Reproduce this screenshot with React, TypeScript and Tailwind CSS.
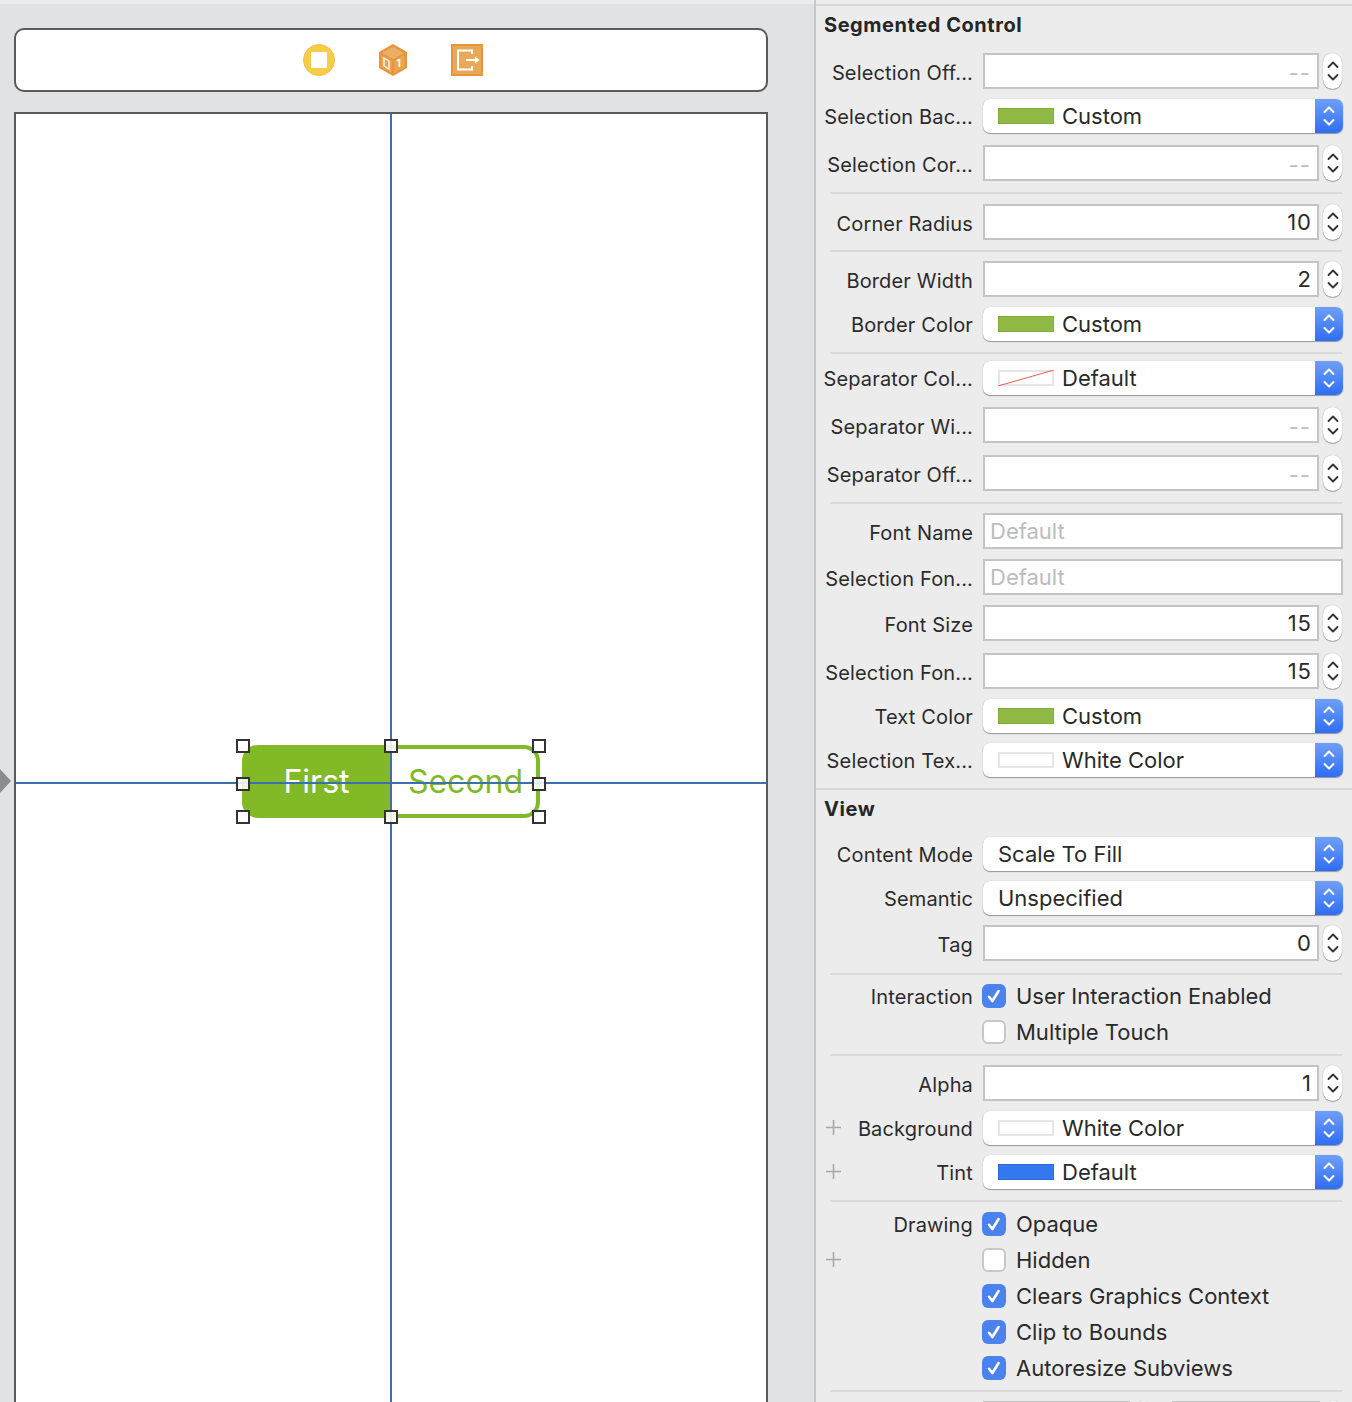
import React from 'react';

const FONT = 'font-["Inter","Liberation_Sans",sans-serif]';

const Divider: React.FC<{ className: string }> = ({ className }) => (
  <div className={`h-[2px] ml-[14px] mr-[10px] bg-[#d9d9d9] ${className}`} />
);

const Chevrons: React.FC<{ color: string; sw?: number }> = ({ color, sw = 2 }) => (
  <svg width="14" height="26" viewBox="0 0 14 26" fill="none" stroke={color} strokeWidth={sw} strokeLinecap="round" strokeLinejoin="round">
    <path d="M2.5 9 L7 4.5 L11.5 9" />
    <path d="M2.5 17 L7 21.5 L11.5 17" />
  </svg>
);

const Stepper = () => (
  <div className="ml-[4px] w-[19px] h-[36px] rounded-full bg-white shadow-[0_1px_1px_rgba(0,0,0,0.3),0_0_1px_rgba(0,0,0,0.3)] flex items-center justify-center shrink-0">
    <Chevrons color="#333333" sw={1.8} />
  </div>
);

// label column, right aligned, with an optional plus on the left
const Label: React.FC<{ text?: string; plus?: boolean; nudge?: boolean }> = ({ text, plus, nudge }) => (
  <div className={`w-[157px] shrink-0 flex items-center justify-between text-[20px] tracking-[0.15px] text-[#2b2b2b] ${nudge ? 'pt-[3px]' : 'pt-[1px]'}`}>
    {plus ? (
      <svg className="ml-[10px] -mt-[3px]" width="15" height="15" viewBox="0 0 15 15" stroke="#a8a8a8" strokeWidth="1.6">
        <path d="M7.5 0 V15 M0 7.5 H15" />
      </svg>
    ) : (
      <span />
    )}
    <span className="whitespace-nowrap">{text}</span>
  </div>
);

const NumberRow: React.FC<{ label: string; value?: string; className: string }> = ({ label, value, className }) => (
  <div className={`flex h-[36px] pr-[10px] ${className}`}>
    <Label text={label} nudge />
    <div className="ml-[10px] w-[336px] h-[36px] bg-white border-2 border-[#c4c4c4] flex items-center justify-end pr-[5px] pt-[1px] text-[22px] tracking-[1px] text-[#2a2a2a]">
      {value ?? <span className="text-[#bdbdbd] tracking-[1px] pt-[3px] pr-[1px]">--</span>}
    </div>
    <Stepper />
  </div>
);

const TextRow: React.FC<{ label: string; className: string }> = ({ label, className }) => (
  <div className={`flex h-[36px] pr-[9px] ${className}`}>
    <Label text={label} nudge />
    <div className="ml-[10px] flex-1 h-[36px] bg-white border-2 border-[#c4c4c4] flex items-center pl-[5px] pt-[1px] text-[22px] text-[#bcbcbc]">
      Default
    </div>
  </div>
);

type Swatch = 'green' | 'none' | 'white' | 'blue' | 'hide';

const SwatchBox: React.FC<{ kind: Swatch }> = ({ kind }) => {
  if (kind === 'hide') return null;
  if (kind === 'green') return <div className="w-[56px] h-[16px] bg-[#8fb844] border border-[#82ad3a] mr-[8px]" />;
  if (kind === 'blue') return <div className="w-[56px] h-[16px] bg-[#3478f0] border border-[#2f6bd8] mr-[8px]" />;
  if (kind === 'white') return <div className="w-[56px] h-[16px] bg-white border-2 border-[#e6e6e6] mr-[8px]" />;
  return (
    <svg className="mr-[8px]" width="56" height="16" viewBox="0 0 56 16">
      <rect x="1" y="1" width="54" height="14" fill="#fff" stroke="#e6e6e6" strokeWidth="2" />
      <path d="M0 16 L56 0" stroke="#ee5a50" strokeWidth="1" />
    </svg>
  );
};

const PopupRow: React.FC<{ label: string; value: string; swatch: Swatch; plus?: boolean; className: string }> = ({
  label,
  value,
  swatch,
  plus,
  className,
}) => (
  <div className={`flex h-[34px] pr-[9px] ${className}`}>
    <Label text={label} plus={plus} />
    <div className="ml-[10px] flex-1 h-[34px] rounded-[7px] bg-white shadow-[0_1px_1px_rgba(0,0,0,0.35),0_0_1px_rgba(0,0,0,0.25)] flex items-center overflow-hidden">
      <div className="flex-1 flex items-center pl-[15px] text-[22px] text-[#2a2a2a] whitespace-nowrap">
        <SwatchBox kind={swatch} />
        {value}
      </div>
      <div className="w-[28px] h-full bg-gradient-to-b from-[#6f9ff6] to-[#2e6cf5] flex items-center justify-center">
        <Chevrons color="#ffffff" />
      </div>
    </div>
  </div>
);

const CheckRow: React.FC<{ label?: string; text: string; checked?: boolean; plus?: boolean; className: string }> = ({
  label,
  text,
  checked,
  plus,
  className,
}) => (
  <div className={`flex h-[24px] pr-[10px] ${className}`}>
    <Label text={label} plus={plus} />
    <div className="ml-[9px] flex items-center">
      {checked ? (
        <div className="w-[24px] h-[24px] rounded-[6px] bg-[#4b82ee] flex items-center justify-center">
          <svg width="16" height="16" viewBox="0 0 16 16" fill="none" stroke="#fff" strokeWidth="2.6" strokeLinecap="round" strokeLinejoin="round">
            <path d="M3 8.8 L6.4 13 L12.6 3" />
          </svg>
        </div>
      ) : (
        <div className="w-[24px] h-[24px] rounded-[6px] bg-white border-2 border-[#c8c8c8]" />
      )}
      <span className="ml-[10px] text-[22px] text-[#2a2a2a] whitespace-nowrap">{text}</span>
    </div>
  </div>
);

const Handle: React.FC<{ x: string }> = ({ x }) => (
  <div className={`absolute w-[14px] h-[14px] border-2 border-[#333333] bg-white/85 ${x}`} />
);

export default function App() {
  return (
    <div className={`w-[1352px] h-[1402px] overflow-hidden flex bg-[#ececec] ${FONT}`}>
      {/* Storyboard side */}
      <div className="relative w-[814px] h-full shrink-0 pt-[4px]">
        <div className="h-full bg-[#e1e2e6] pt-[24px] px-[14px] pr-[46px]">
          <div className="h-[64px] bg-white border-2 border-[#5a5a5a] rounded-[10px] flex items-center justify-center gap-[44px] pl-[4px]">
            <svg width="32" height="32" viewBox="0 0 32 32">
              <circle cx="16" cy="16" r="15.5" fill="#f8cd46" stroke="#f2bf52" strokeWidth="1" />
              <rect x="8" y="8" width="16" height="16" rx="1" fill="#fff" />
            </svg>
            <svg width="28" height="32" viewBox="0 0 28 32">
              <path d="M14 0 L28 8 V24 L14 32 L0 24 V8 Z" fill="#e8953a" />
              <path d="M14 3 L25 9 L14 15 L3 9 Z" fill="#eab06a" />
              <path d="M2.5 11 L13 17 V29 L2.5 23 Z" fill="#e9a555" />
              <path d="M25.5 11 L15 17 V29 L25.5 23 Z" fill="#e9a555" />
              <path d="M5 14 L10 17 V25 L5 22 Z" fill="none" stroke="#fff" strokeWidth="1.3" />
              <text x="17.5" y="23" fill="#fff" fontSize="10" fontWeight="700" fontFamily="Inter">1</text>
            </svg>
            <svg width="32" height="32" viewBox="0 0 32 32">
              <rect x="1" y="1" width="30" height="30" fill="#e9a95b" stroke="#e8953a" strokeWidth="2" />
              <path d="M21 10 V6.5 H7 V25.5 H21 V22" fill="none" stroke="#fff" strokeWidth="2" />
              <path d="M15 16 H25" stroke="#fff" strokeWidth="2" />
              <path d="M24 12.5 L28.5 16 L24 19.5 Z" fill="#fff" />
            </svg>
          </div>

          <div className="relative mt-[20px] h-[1400px] bg-white border-2 border-b-0 border-[#5a5a5a]">
            {/* Selected segmented control on the canvas */}
            <div className="absolute left-[226px] top-[631px] w-[298px] h-[73px] flex text-[32px]">
              <div className="w-[149px] bg-[#82b926] rounded-l-[16px] text-white flex items-center justify-center">First</div>
              <div className="flex-1 border-[4px] border-l-0 border-[#82b926] rounded-r-[16px] text-[#82b926] flex items-center justify-center pl-[4px]">Second</div>
            </div>

            {/* Guides */}
            <div className="absolute left-[374px] top-0 bottom-0 w-[2px] bg-[#3c70aa]" />
            <div className="absolute left-0 right-0 top-[668px] h-[2px] bg-[#3c70aa]" />

            {/* Handles */}
            <div className="absolute left-0 top-[625px] w-full h-0">
              <Handle x="left-[220px] top-0" />
              <Handle x="left-[368px] top-0" />
              <Handle x="left-[516px] top-0" />
              <Handle x="left-[220px] top-[38px]" />
              <Handle x="left-[516px] top-[38px]" />
              <Handle x="left-[220px] top-[71px]" />
              <Handle x="left-[368px] top-[71px]" />
              <Handle x="left-[516px] top-[71px]" />
            </div>
          </div>
        </div>
        <div className="absolute left-0 top-[769px] w-0 h-0 border-y-[12px] border-y-transparent border-l-[11px] border-l-[#8c8c8c]" />
      </div>

      {/* Inspector */}
      <div className="w-[538px] h-full shrink-0 border-l-2 border-[#c8c8c8] pt-[4px] overflow-hidden">
        <div className="h-[2px] bg-[#d9d9d9]" />
        <div className="mt-[7px] h-[24px] pl-[8px] text-[20px] tracking-[0.55px] font-bold text-[#262626] leading-[24px]">Segmented Control</div>

        <NumberRow className="mt-[16px]" label="Selection Off..." />
        <PopupRow className="mt-[10px]" label="Selection Bac..." value="Custom" swatch="green" />
        <NumberRow className="mt-[12px]" label="Selection Cor..." />
        <Divider className="mt-[11px]" />
        <NumberRow className="mt-[10px]" label="Corner Radius" value="10" />
        <Divider className="mt-[10px]" />
        <NumberRow className="mt-[9px]" label="Border Width" value="2" />
        <PopupRow className="mt-[10px]" label="Border Color" value="Custom" swatch="green" />
        <Divider className="mt-[11px]" />
        <PopupRow className="mt-[7px]" label="Separator Col..." value="Default" swatch="none" />
        <NumberRow className="mt-[12px]" label="Separator Wi..." />
        <NumberRow className="mt-[12px]" label="Separator Off..." />
        <Divider className="mt-[11px]" />
        <TextRow className="mt-[9px]" label="Font Name" />
        <TextRow className="mt-[10px]" label="Selection Fon..." />
        <NumberRow className="mt-[10px]" label="Font Size" value="15" />
        <NumberRow className="mt-[12px]" label="Selection Fon..." value="15" />
        <PopupRow className="mt-[10px]" label="Text Color" value="Custom" swatch="green" />
        <PopupRow className="mt-[10px]" label="Selection Tex..." value="White Color" swatch="white" />

        <div className="mt-[11px] h-[2px] bg-[#d9d9d9]" />
        <div className="mt-[7px] h-[24px] pl-[8px] text-[20px] tracking-[0.55px] font-bold text-[#262626] leading-[24px]">View</div>

        <PopupRow className="mt-[16px]" label="Content Mode" value="Scale To Fill" swatch="hide" />
        <PopupRow className="mt-[10px]" label="Semantic" value="Unspecified" swatch="hide" />
        <NumberRow className="mt-[10px]" label="Tag" value="0" />
        <Divider className="mt-[12px]" />
        <CheckRow className="mt-[9px]" label="Interaction" text="User Interaction Enabled" checked />
        <CheckRow className="mt-[12px]" text="Multiple Touch" />
        <Divider className="mt-[10px]" />
        <NumberRow className="mt-[9px]" label="Alpha" value="1" />
        <PopupRow className="mt-[10px]" label="Background" value="White Color" swatch="white" plus />
        <PopupRow className="mt-[10px]" label="Tint" value="Default" swatch="blue" plus />
        <Divider className="mt-[11px]" />
        <CheckRow className="mt-[10px]" label="Drawing" text="Opaque" checked />
        <CheckRow className="mt-[12px]" text="Hidden" plus />
        <CheckRow className="mt-[12px]" text="Clears Graphics Context" checked />
        <CheckRow className="mt-[12px]" text="Clip to Bounds" checked />
        <CheckRow className="mt-[12px]" text="Autoresize Subviews" checked />
        <Divider className="mt-[10px]" />

        {/* next row, cut off by the window */}
        <div className="mt-[9px] flex pl-[167px]">
          <div className="w-[147px] h-[36px] bg-white border-2 border-[#c4c4c4]" />
          <Stepper />
          <div className="ml-[19px] w-[148px] h-[36px] bg-white border-2 border-[#c4c4c4]" />
          <Stepper />
        </div>
      </div>
    </div>
  );
}
